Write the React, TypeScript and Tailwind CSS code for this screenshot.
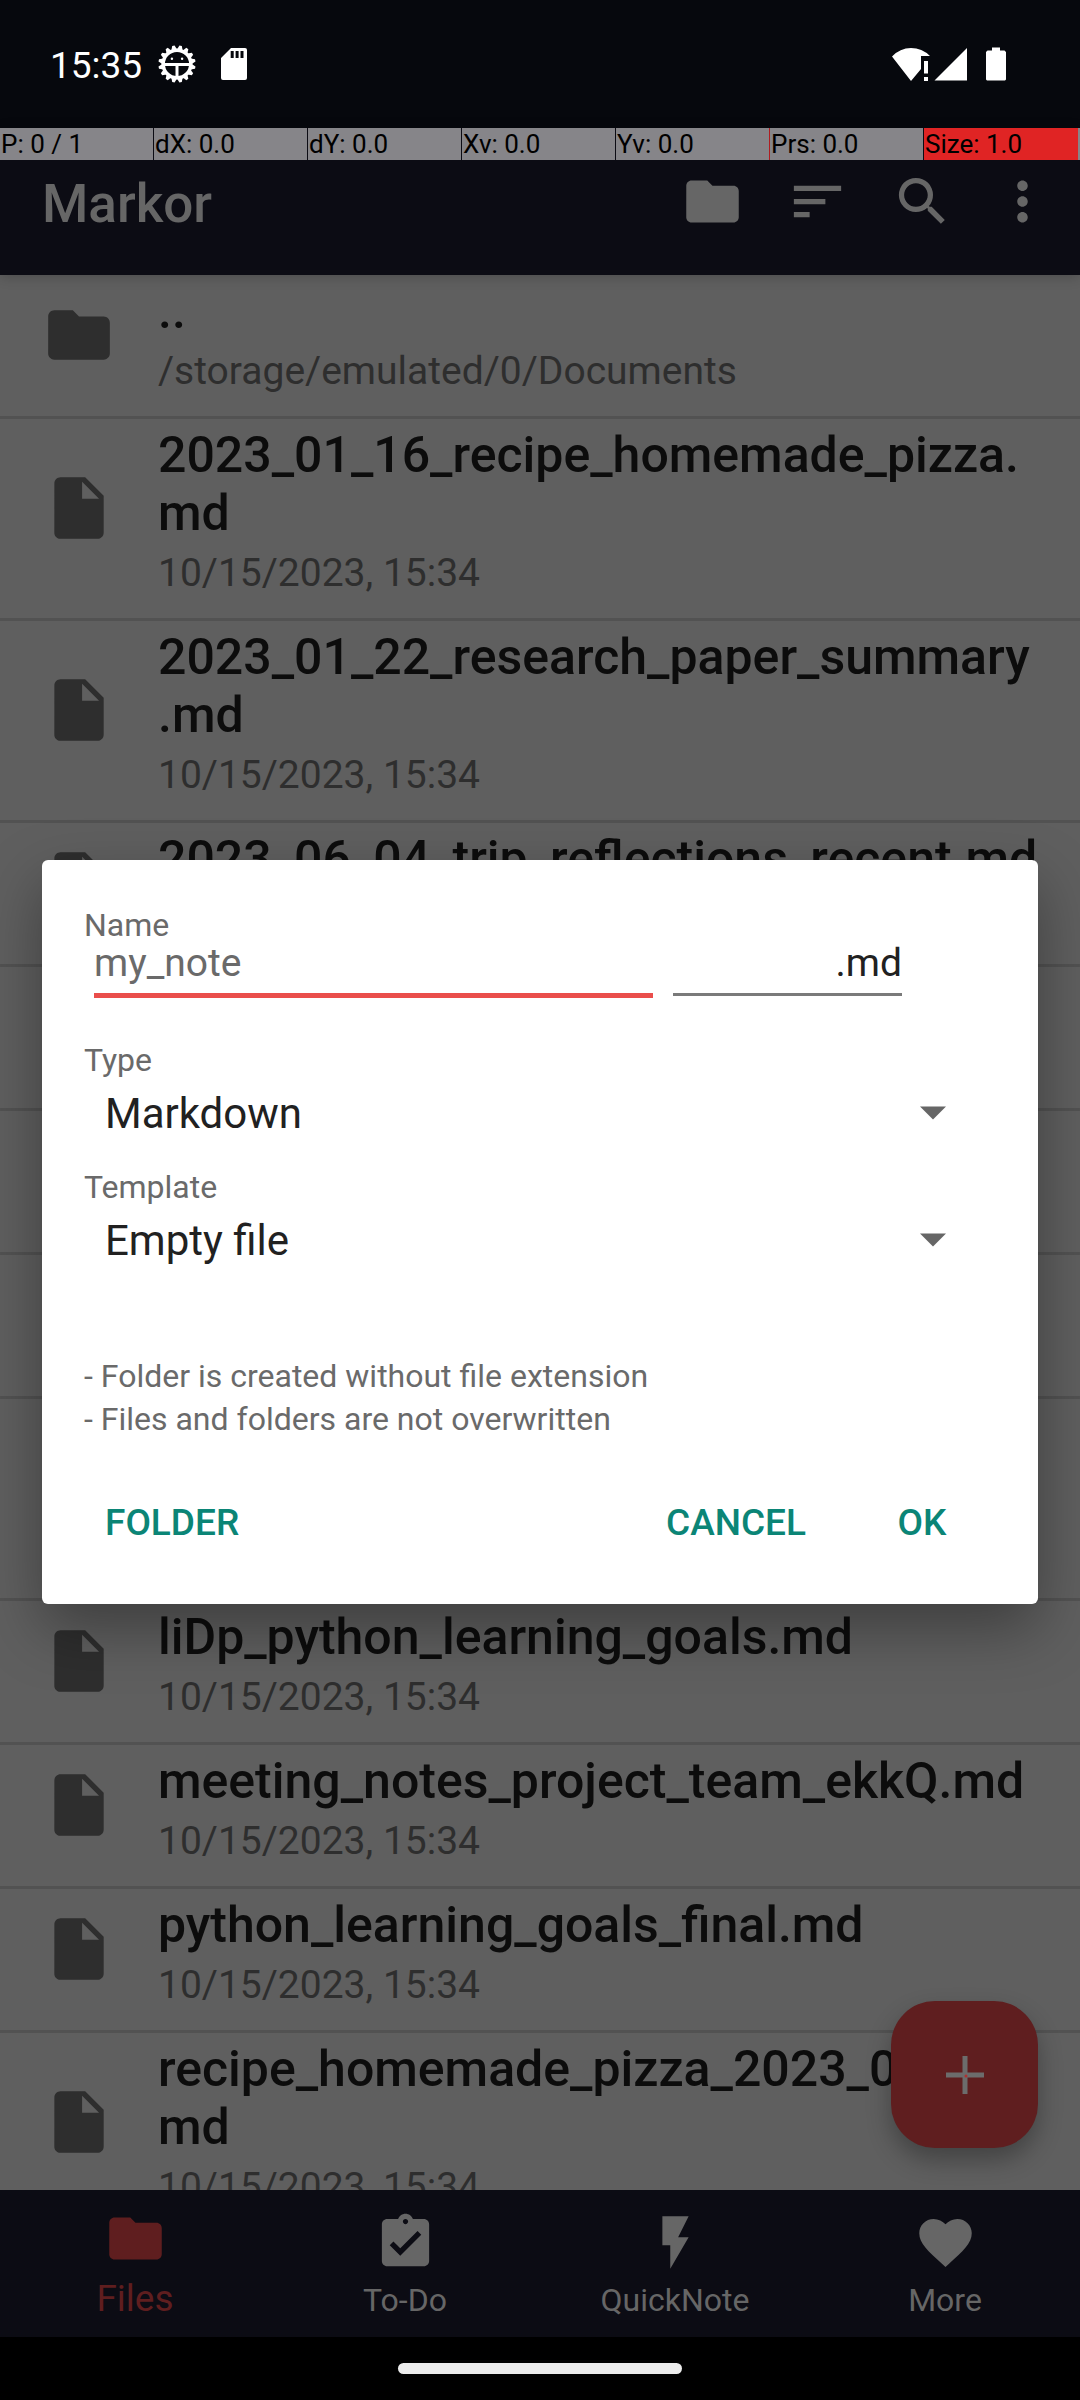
import { MdAssignmentTurnedIn, MdFavorite, MdFlashOn, MdFolder, MdInsertDriveFile, MdMoreVert, MdSearch, MdSort } from "react-icons/md";

const DATE = "10/15/2023, 15:34";

// "stem" and "tail" together form the file name; a long name wraps between them.
const entries = [
  { stem: "..", tail: "", detail: "/storage/emulated/0/Documents", folder: true },
  { stem: "2023_01_16_recipe_homemade_pizza.", tail: "md", detail: DATE },
  { stem: "2023_01_22_research_paper_summary", tail: ".md", detail: DATE },
  { stem: "2023_06_04_trip_reflections_recent", tail: ".md", detail: DATE },
  { stem: "book_summary", tail: ".md", detail: DATE },
  { stem: "daily_journal", tail: ".md", detail: DATE },
  { stem: "fitness_plan", tail: ".md", detail: DATE },
  { stem: "grocery_list_weekly_2023_05_14_fin", tail: "al.md", detail: DATE },
  { stem: "liDp_python_learning_goals", tail: ".md", detail: DATE },
  { stem: "meeting_notes_project_team_ekkQ", tail: ".md", detail: DATE },
  { stem: "python_learning_goals_final", tail: ".md", detail: DATE },
  { stem: "recipe_homemade_pizza_2023_01_16.", tail: "md", detail: DATE },
];

const gauges = [
  { text: "P: 0 / 1", style: "bg-[#868589] border-[#0c0c14]" },
  { text: "dX: 0.0", style: "bg-[#868589] border-[#0c0c14]" },
  { text: "dY: 0.0", style: "bg-[#868589] border-[#0c0c14]" },
  { text: "Xv: 0.0", style: "bg-[#868589] border-[#0c0c14]" },
  { text: "Yv: 0.0", style: "bg-[#868589] border-[#b01c20]" },
  { text: "Prs: 0.0", style: "bg-[#868589] border-[#0c0c14]" },
  { text: "Size: 1.0", style: "bg-[#e02424] border-[#e02424]" },
];

const tabs = [
  { label: "Files", Icon: MdFolder, style: "gap-2 pb-[17px] text-[#5f1e1f] text-[37px] leading-[42px]" },
  { label: "To-Do", Icon: MdAssignmentTurnedIn, style: "gap-[7px] pb-[18px] text-[#666666] text-[32px] leading-[38px]" },
  { label: "QuickNote", Icon: MdFlashOn, style: "gap-[7px] pb-[18px] text-[#666666] text-[32px] leading-[38px]" },
  { label: "More", Icon: MdFavorite, style: "gap-[7px] pb-[18px] text-[#666666] text-[32px] leading-[38px]" },
];

const gearTeeth = Array.from({ length: 16 }, (_, i) => i * 22.5 + 11.25);

function DebugGear() {
  return (
    <svg className="ml-4 h-[38px] w-[38px]" viewBox="0 0 38 38" fill="none" stroke="white" aria-hidden="true">
      {gearTeeth.map((a) => (
        <path key={a} d="M16.2 4.5 L17.8 0.4 H20.2 L21.8 4.5Z" fill="white" stroke="none" transform={`rotate(${a} 19 19)`} />
      ))}
      <circle cx="19" cy="19" r="13.800" strokeWidth="3.400" />
      <path d="M5.500 19.500H32.500M19 19.500V34" strokeWidth="3" />
      <circle cx="13.900" cy="13.700" r="1.200" fill="white" stroke="none" />
      <circle cx="24.100" cy="13.700" r="1.200" fill="white" stroke="none" />
    </svg>
  );
}

function StatusBar() {
  return (
    <header className="flex h-32 shrink-0 items-center bg-[#06080d] pr-[74px] pl-[50px] text-white">
      <span className="pt-1 text-[37px] leading-[44px]">15:35</span>
      <DebugGear />
      <svg className="ml-[25px] h-8 w-[26px]" viewBox="0 0 26 32" aria-hidden="true">
        <path fill="white" fillRule="evenodd" d="M10 0H24Q26 0 26 2V30Q26 32 24 32H2Q0 32 0 30V10ZM9.7 3V10H12.7V3ZM14.6 3V10H17.6V3ZM19.5 3V10H22.5V3Z" />
      </svg>
      <svg className="ml-auto h-[34px] w-[38px]" viewBox="0 0 38 34" fill="white" aria-hidden="true">
        <path d="M0 9.5Q8 1 19 1T38 9H29V22L19 34Z" />
        <path d="M32 14H36V26.500H32ZM32 30H36V34H32Z" />
      </svg>
      <svg className="ml-1 h-[34px] w-[33px]" viewBox="0 0 33 34" fill="white" aria-hidden="true">
        <path d="M0.500 33.500L33 1V33.500Z" />
      </svg>
      <svg className="ml-[19px] h-[34px] w-5" viewBox="0 0 20 34" fill="white" aria-hidden="true">
        <path d="M6 0.500H14V3.500H18.500L20 5V32.500L19 33.500H1L0 32.500V5L1.500 3.500H6Z" />
      </svg>
    </header>
  );
}

function Toolbar() {
  return (
    <div className="relative z-10 h-[147px] shrink-0 bg-[#0c0c14] text-[#666666] shadow-[0_2px_12px_rgba(0,0,0,0.2)]">
      <div className="flex h-full items-center pr-[26px] pl-[42px]">
        <h1 className="flex-1 pt-1 text-[53px] leading-[62px] font-medium">Markor</h1>
        <div className="flex items-center gap-[42px] pb-px">
          <button aria-label="Go to folder"><MdFolder className="size-[63px]" /></button>
          <button aria-label="Sort"><MdSort className="size-[63px]" /></button>
          <button aria-label="Search"><MdSearch className="size-[63px]" /></button>
        </div>
        <button aria-label="More options" className="ml-[37px]"><MdMoreVert className="size-[63px]" /></button>
      </div>
      <div className="absolute inset-x-0 top-0 flex h-8 bg-[#868589] pr-[2px] text-[26px] leading-8 text-black">
        {gauges.map((g) => (
          <span key={g.text} className={`flex-1 border-r pl-px whitespace-nowrap ${g.style}`}>{g.text}</span>
        ))}
      </div>
    </div>
  );
}

function FileList() {
  return (
    <main className="relative min-h-0 flex-1 overflow-hidden bg-[#5f5f5f]">
      <ul>
        {entries.map((e) => {
          const Icon = e.folder ? MdFolder : MdInsertDriveFile;
          return (
            <li key={e.stem} className="flex items-center gap-[42px] border-b-[3px] border-[#525252] pt-px pr-9 pb-[22px] pl-[42px]">
              <Icon className="size-[74px] shrink-0 text-[#2e2e2e]" />
              <div className="min-w-0 flex-1 pt-[6px]">
                <p className="text-[50px] leading-[58px] font-medium wrap-break-word text-[#0c0c0c]">{e.stem}<wbr />{e.tail}</p>
                <p className="mt-2 text-[39px] leading-[46px] text-[#2e2e2e]">{e.detail}</p>
              </div>
            </li>
          );
        })}
      </ul>
      <button aria-label="New file" className="absolute right-[42px] bottom-[42px] flex size-[147px] items-center justify-center rounded-[44px] bg-[#5f1e1f] shadow-[0_12px_24px_rgba(0,0,0,0.3)]">
        <svg className="size-[38px]" viewBox="0 0 38 38" aria-hidden="true">
          <path d="M19 0V38M0 19H38" stroke="#6c6c6c" strokeWidth="5" />
          <circle cx="20" cy="20" r="1.500" fill="#b03030" />
        </svg>
      </button>
    </main>
  );
}

function Picker({ id, label, value }: { id: string; label: string; value: string }) {
  return (
    <div>
      <label htmlFor={id} className="block text-[32px] leading-8 text-[#6a6a6a]">{label}</label>
      <div className="relative">
        <select id={id} className="block h-[75px] w-full appearance-none bg-transparent pl-[21px] text-[42px] text-[#212121]">
          <option>{value}</option>
        </select>
        <svg className="pointer-events-none absolute top-[30px] right-[50px] h-[14px] w-[26px]" viewBox="0 0 26 14" aria-hidden="true">
          <path d="M0 0.500H26L13 13.500Z" fill="#666666" />
        </svg>
      </div>
    </div>
  );
}

function NewFileDialog() {
  return (
    <div className="absolute inset-0 z-20 flex items-center px-[42px] pt-32 pb-16">
      <form role="dialog" aria-label="New file" className="w-full rounded-md bg-white pt-[49px] pb-[35px] shadow-[0_24px_60px_rgba(0,0,0,0.35)]">
        <div className="px-[42px]">
          <label htmlFor="name" className="block text-[32px] leading-8 text-[#6a6a6a]">Name</label>
          <div className="flex h-[57px] items-start gap-5 pr-[94px] pl-[10px] text-[39px] leading-[44px]">
            <input id="name" placeholder="my_note" className="h-[57px] min-w-0 flex-1 border-b-[5px] border-[#ea4e4b] bg-transparent pb-2 outline-none placeholder:text-[#6a6a6a]" />
            <input aria-label="File extension" defaultValue=".md" className="h-[55px] w-[229px] border-b-[3px] border-[#7a7a7a] bg-transparent pb-2 text-right text-[#212121] outline-none" />
          </div>
          <div className="mt-[46px] flex flex-col gap-5">
            <Picker id="type" label="Type" value="Markdown" />
            <Picker id="template" label="Template" value="Empty file" />
          </div>
          <div className="mt-[77px] text-[32px] leading-[43px] text-[#6a6a6a]">
            <p>- Folder is created without file extension</p>
            <p>- Files and folders are not overwritten</p>
          </div>
        </div>
        <div className="mt-9 flex h-[92px] items-stretch gap-[11px] pr-8 pl-[42px] text-[37px] font-medium text-[#0b8576]">
          <button type="button" className="mr-auto px-[21px]">FOLDER</button>
          <button type="button" className="px-[21px]">CANCEL</button>
          <button type="button" className="w-[168px]">OK</button>
        </div>
      </form>
    </div>
  );
}

export default function App() {
  return (
    <div className="relative flex h-screen flex-col overflow-hidden bg-black font-[Roboto,sans-serif]">
      <StatusBar />
      <Toolbar />
      <FileList />
      <nav className="grid h-[147px] shrink-0 grid-cols-4 bg-[#0c0c14]">
        {tabs.map(({ label, Icon, style }) => (
          <button key={label} className={`flex flex-col items-center justify-end ${style}`}>
            <Icon className="size-[63px]" />
            {label}
          </button>
        ))}
      </nav>
      <footer className="flex h-[63px] shrink-0 items-center justify-center">
        <span className="h-[11px] w-[284px] rounded-full bg-[#ececec]" />
      </footer>
      <NewFileDialog />
    </div>
  );
}
